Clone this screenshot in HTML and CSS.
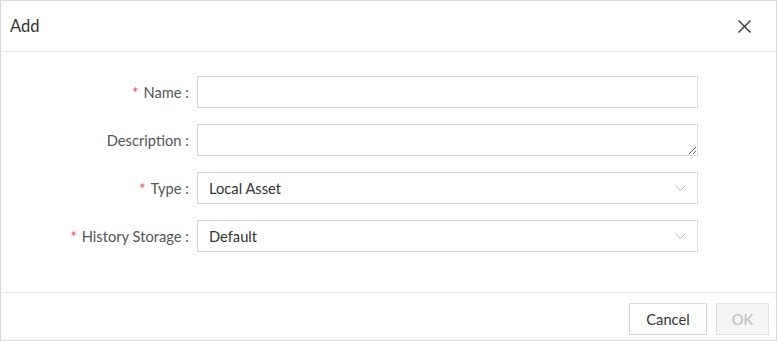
FILE: index.html
```html
<!DOCTYPE html>
<html lang="en">

<head>
    <meta charset="UTF-8">
    <meta name="viewport" content="width=device-width, initial-scale=1.0">
    <title>Add</title>
    <link rel="stylesheet" href="styles.css">
</head>

<body>
    <div class="dialog">
        <div class="dialogHead">
            <span class="title">Add</span>
            <span class="close">
                <svg width="13" height="13" viewBox="0 0 13 13">
                    <path d="M0.5 0.5L12.5 12.5M12.5 0.5L0.5 12.5" stroke="#333" stroke-width="1.4" fill="none" />
                </svg>
            </span>
        </div>

        <div class="dialogBody">
            <div class="form">
                <label class="label"><i>*</i>Name :</label>
                <input class="field" type="text">

                <label class="label">Description :</label>
                <textarea class="field area"></textarea>

                <label class="label"><i>*</i>Type :</label>
                <div class="field select">
                    <span>Local Asset</span>
                    <svg width="11" height="6" viewBox="0 0 11 6">
                        <path d="M0.5 0.5L5.5 5.5L10.5 0.5" stroke="#bbb" stroke-width="1" fill="none" />
                    </svg>
                </div>

                <label class="label"><i>*</i>History Storage :</label>
                <div class="field select">
                    <span>Default</span>
                    <svg width="11" height="6" viewBox="0 0 11 6">
                        <path d="M0.5 0.5L5.5 5.5L10.5 0.5" stroke="#bbb" stroke-width="1" fill="none" />
                    </svg>
                </div>
            </div>
        </div>

        <div class="dialogFoot">
            <button class="btn cancel">Cancel</button>
            <button class="btn ok" disabled>OK</button>
        </div>
    </div>
</body>

</html>
```

FILE: styles.css
```css
body {
    margin: 0;
    font-family: Lato, "Open Sans", sans-serif;
    background-color: #fff;
}

.dialog {
    width: 777px;
    height: 341px;
    box-sizing: border-box;
    border: 1px solid #d9d9d9;
    display: flex;
    flex-direction: column;
}

.dialogHead {
    height: 50px;
    border-bottom: 1px solid #ebebeb;
    display: flex;
    align-items: center;
    justify-content: space-between;
    padding: 0 24px 0 8px;
    margin: 0 1px;
}

.title {
    font-size: 16.5px;
    color: #333;
}

.close {
    display: flex;
    padding-top: 1px;
}

.dialogBody {
    flex: 1;
    padding-top: 24px;
    border-bottom: 1px solid #ebebeb;
    margin: 0 1px;
}

.form {
    display: grid;
    grid-template-columns: 187px 501px;
    column-gap: 8px;
    row-gap: 16px;
    align-items: center;
}

.label {
    text-align: right;
    font-size: 14.7px;
    color: #555;
}

.label i {
    font-style: normal;
    color: #f03c3c;
    margin-right: 5px;
}

.field {
    box-sizing: border-box;
    height: 32px;
    border: 1px solid #d9d9d9;
    border-radius: 0;
    margin: 0;
    padding: 0 11px;
    font-family: Lato, "Open Sans", sans-serif;
    font-size: 14.7px;
    color: #333;
    outline: none;
    background: #fff;
}

.area {
    resize: vertical;
    display: block;
}

.select {
    display: flex;
    align-items: center;
    justify-content: space-between;
    padding-right: 11px;
}

.dialogFoot {
    display: flex;
    justify-content: flex-end;
    gap: 9px;
    padding: 10px 7px 0 0;
    height: 47px;
    box-sizing: border-box;
}

.btn {
    height: 32px;
    padding: 0;
    border: 1px solid #d9d9d9;
    background: #fff;
    font-family: Lato, "Open Sans", sans-serif;
    font-size: 14.7px;
    color: #333;
}

.cancel {
    width: 78px;
}

.ok {
    width: 53px;
    background: #f5f5f5;
    color: #bbb;
    border-color: #e0e0e0;
}
```
